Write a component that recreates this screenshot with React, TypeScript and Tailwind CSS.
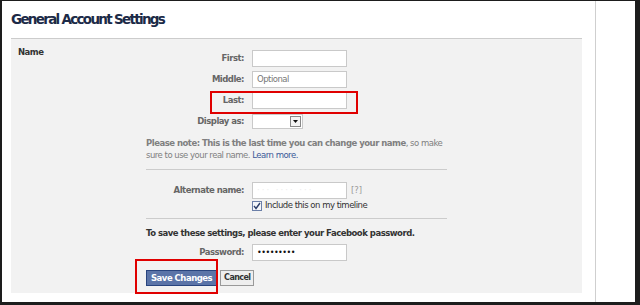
import React from 'react';

const font = { fontFamily: '"DejaVu Sans", Verdana, sans-serif' };

function Row({ label, children, className = '' }: { label: string; children: React.ReactNode; className?: string }) {
  return (
    <div className={`flex items-center ${className}`}>
      <div className="w-[98px] text-right text-[8.5px] tracking-[-0.5px] font-bold text-[#666]">{label}</div>
      <div className="ml-[8px] flex items-center">{children}</div>
    </div>
  );
}

function TextBox({ children }: { children?: React.ReactNode }) {
  return (
    <div className="w-[95px] h-[17px] bg-white border border-[#c9c9c9] flex items-center px-[4px] text-[8.5px] tracking-[-0.5px] text-[#777]">
      {children}
    </div>
  );
}

export default function App() {
  return (
    <div
      className="w-[640px] h-[305px] overflow-hidden bg-white border-l-2 border-t border-r-[5px] border-b-[3px] border-[#1d1d1d] flex"
      style={font}
    >
      {/* ── main column ── */}
      <div className="w-[594px] border-r border-[#cfcfcf] flex flex-col">
        <h1 className="pl-[9px] h-[37px] flex items-center text-[13.5px] font-bold text-[#1c2a47] tracking-[-1.7px]">
          General Account Settings
        </h1>

        <div className="relative ml-[9px] w-[571px] h-[255px] bg-[#f2f2f2] border-t border-[#cccccc] flex pt-[7px] pl-[7px]">
          <div className="w-[128px] text-[8.5px] tracking-[-0.5px] font-bold text-[#333] leading-[13px]">Name</div>

          <div className="flex flex-col pt-[4px]">
            <Row label="First:" className="h-[17px]">
              <TextBox />
            </Row>
            <Row label="Middle:" className="h-[17px] mt-[4px]">
              <TextBox>Optional</TextBox>
            </Row>
            <Row label="Last:" className="h-[17px] mt-[4px]">
              <TextBox />
            </Row>
            <Row label="Display as:" className="h-[15px] mt-[5px]">
              <div className="w-[51px] h-[15px] bg-white border border-[#c9c9c9] flex justify-end items-center pr-[1px]">
                <div className="w-[11px] h-[11px] border border-[#888] bg-[#f4f4f4] flex items-center justify-center">
                  <svg width="5" height="3" viewBox="0 0 5 3">
                    <path d="M0 0h5L2.5 3z" fill="#111" />
                  </svg>
                </div>
              </div>
            </Row>

            <p className="mt-[8px] w-[300px] text-[8.5px] tracking-[-0.5px] leading-[12px] text-[#808080]">
              <span className="font-bold">Please note: This is the last time you can change your name</span>, so make
              sure to use your real name. <span className="text-[#3b5998]">Learn more.</span>
            </p>

            <div className="mt-[8px] w-[301px] h-px bg-[#cccccc]" />

            <Row label="Alternate name:" className="h-[17px] mt-[12px]">
              <TextBox>
                <span className="text-[#ececec] tracking-[2px]">··· ···· ···</span>
              </TextBox>
              <span className="ml-[4px] text-[8.5px] text-[#999]">[?]</span>
            </Row>

            <div className="ml-[106px] h-[13px] flex items-center">
              <div className="w-[10px] h-[10px] border border-[#6b7fa8] bg-[#f4f6fa] flex items-center justify-center">
                <svg width="8" height="8" viewBox="0 0 8 8">
                  <path d="M1 4l2 2.5L7 1" stroke="#2d3f6b" strokeWidth="1.4" fill="none" />
                </svg>
              </div>
              <span className="ml-[3px] text-[8.5px] tracking-[-0.5px] text-[#333]">Include this on my timeline</span>
            </div>

            <div className="mt-[6px] w-[301px] h-px bg-[#cccccc]" />

            <p className="mt-[8px] text-[8.5px] tracking-[-0.5px] leading-[13px] font-bold text-[#333]">
              To save these settings, please enter your Facebook password.
            </p>

            <Row label="Password:" className="h-[17px] mt-[4px]">
              <TextBox>
                <span className="text-[#111] text-[8px]">•••••••••</span>
              </TextBox>
            </Row>

            <div className="mt-[9px] flex gap-[3px]">
              <button className="h-[16px] px-[4px] bg-[#5b74a8] border border-[#29447e] text-white text-[8.5px] tracking-[-0.5px] font-bold leading-none">
                Save Changes
              </button>
              <button className="h-[16px] px-[3px] bg-[#eeeeee] border border-[#999] text-[#333] text-[8px] tracking-[-0.6px] font-bold leading-none">
                Cancel
              </button>
            </div>
          </div>

          {/* red highlight boxes */}
          <div className="absolute left-[199px] top-[52px] w-[148px] h-[23px] border-2 border-[#e00000]" />
          <div className="absolute left-[124px] top-[220px] w-[83px] h-[35px] border-2 border-[#e00000]" />
        </div>
      </div>
      <div className="flex-1" />
    </div>
  );
}
